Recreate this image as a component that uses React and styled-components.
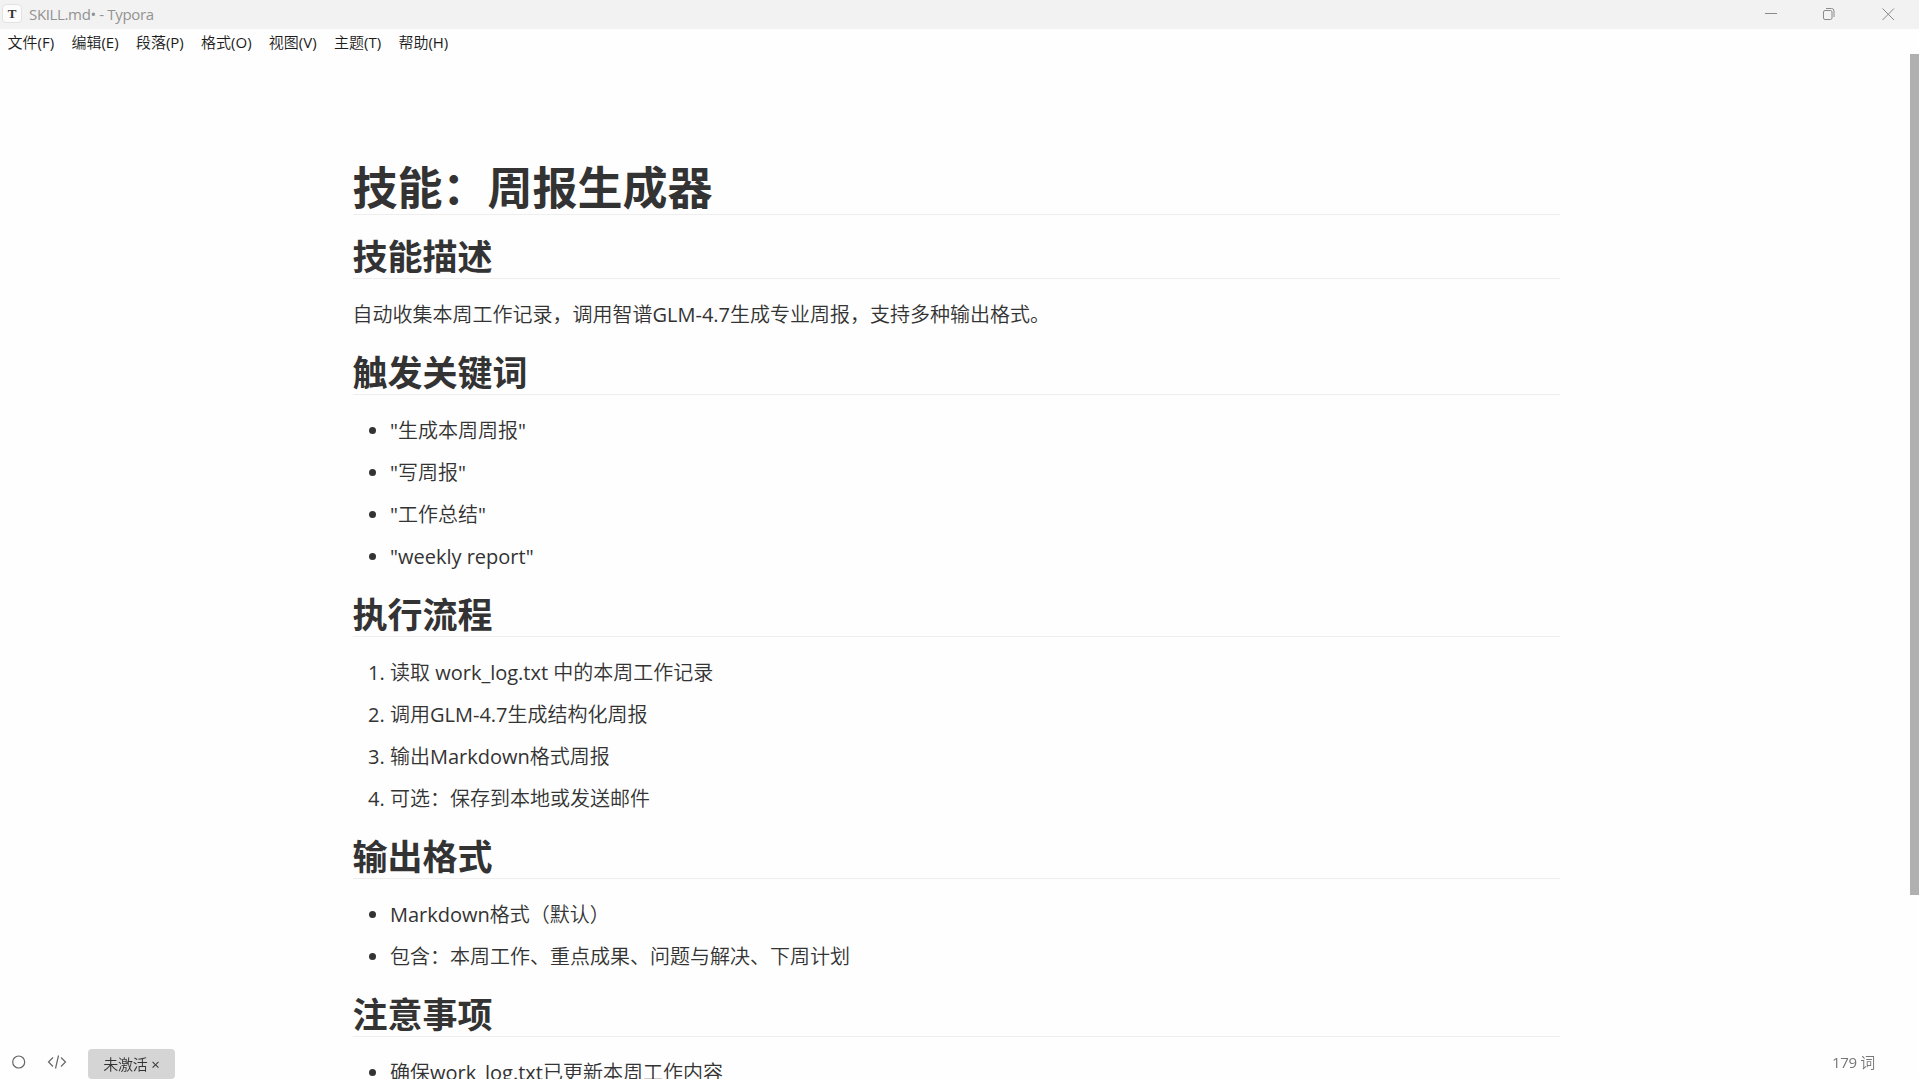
import React from "react";
import styled, { createGlobalStyle } from "styled-components";

const GlobalStyle = createGlobalStyle`
  * {
    box-sizing: border-box;
  }
  body {
    margin: 0;
    background-color: #fefefe;
    color: #333;
    font-family: "Open Sans", "Noto Sans CJK SC DemiLight", "Noto Sans CJK SC", sans-serif;
    overflow: hidden;
  }
`;

const Window = styled.div`
  display: flex;
  flex-flow: column;
  height: 1079px;
  overflow: hidden;
`;

const TitleBar = styled.header`
  display: flex;
  align-items: center;
  flex: 0 0 29px;
  padding-left: 2px;
  background-color: #f2f2f2;
`;

const AppIcon = styled.div`
  width: 20px;
  height: 19px;
  margin-top: -2px;
  border: 1px solid #e2e2e2;
  border-radius: 4px;
  background-color: #fcfcfc;
  color: #333;
  font: bold 13px/17px "Liberation Serif", serif;
  text-align: center;
`;

const Title = styled.span`
  flex: 1;
  padding-left: 7px;
  color: #929292;
  font-size: 15px;
  line-height: 29px;
  letter-spacing: -0.35px;
`;

const Controls = styled.div`
  display: flex;
  padding-right: 1px;
  svg {
    display: block;
    width: 58.5px;
    height: 29px;
    fill: none;
    stroke: #8a8a8a;
  }
`;

const MenuBar = styled.nav`
  display: flex;
  flex: 0 0 25px;
  min-height: 0;
  gap: 17.3px;
  padding: 0 7.5px;
  color: #1c1c1c;
  font-size: 15px;
  line-height: 27px;
  white-space: nowrap;
`;

const Editor = styled.main`
  display: flex;
  justify-content: space-between;
  flex: 1;
  min-height: 0;
  overflow: hidden;
`;

const Article = styled.article`
  width: 1207px;
  margin-left: 352.5px;
  padding-top: 106.4px;
  font-size: 20px;
  line-height: 32px;
`;

const H1 = styled.h1`
  margin: 0 0 20px;
  padding-top: 2px;
  border-bottom: 1px solid #eee;
  font-family: "Open Sans", "Noto Sans CJK SC", sans-serif;
  font-size: 45px;
  line-height: 52px;
`;

const H2 = styled.h2`
  margin: 20px 0;
  padding-top: 1px;
  border-bottom: 1px solid #eee;
  font-family: "Open Sans", "Noto Sans CJK SC", sans-serif;
  font-size: 35px;
  line-height: 41.875px;
`;

const Text = styled.p`
  margin: 20px 0;
`;

const List = styled.ul`
  margin: 20px 0;
  padding-left: 37.5px;
  li + li {
    margin-top: 10px;
  }
`;

const Scrollbar = styled.div`
  width: 9px;
  height: 841px;
  background-color: #b0b0b0;
`;

const StatusBar = styled.footer`
  position: fixed;
  left: 0;
  right: 0;
  bottom: 0;
  display: flex;
  align-items: flex-start;
  height: 31px;
  padding: 0 44px 0 11px;
  color: #666;
  font-size: 15px;
  svg {
    display: block;
    fill: none;
    stroke: #666;
    stroke-width: 1.2;
  }
`;

const CodeIcon = styled.svg`
  margin-left: 20px;
`;

const License = styled.div`
  width: 87px;
  height: 30px;
  margin: 1px 0 0 21px;
  border-radius: 4px;
  background-color: #d5d5d5;
  color: #333;
  line-height: 30px;
  text-align: center;
  letter-spacing: -0.2px;
  white-space: nowrap;
`;

const WordCount = styled.span`
  margin-left: auto;
  color: #777;
  line-height: 28px;
  letter-spacing: -0.35px;
`;

const menus = ["文件(F)", "编辑(E)", "段落(P)", "格式(O)", "视图(V)", "主题(T)", "帮助(H)"];

const sections = [
  { title: "技能描述", text: "自动收集本周工作记录，调用智谱GLM-4.7生成专业周报，支持多种输出格式。" },
  {
    title: "触发关键词",
    items: ['"生成本周周报"', '"写周报"', '"工作总结"', '"weekly report"'],
  },
  {
    title: "执行流程",
    ordered: true,
    items: [
      "读取 work_log.txt 中的本周工作记录",
      "调用GLM-4.7生成结构化周报",
      "输出Markdown格式周报",
      "可选：保存到本地或发送邮件",
    ],
  },
  {
    title: "输出格式",
    items: ["Markdown格式（默认）", "包含：本周工作、重点成果、问题与解决、下周计划"],
  },
  { title: "注意事项", items: ["确保work_log.txt已更新本周工作内容"] },
];

const WindowControls = () => (
  <Controls>
    <svg viewBox="0 0 58.5 29">
      <path d="M22 13.5h12" />
    </svg>
    <svg viewBox="0 0 58.5 29">
      <rect x="22.5" y="10.5" width="8.5" height="9" rx="1.5" />
      <path d="M25 8.5h5.5a2.5 2.5 0 0 1 2.5 2.5v6" />
    </svg>
    <svg viewBox="0 0 58.5 29">
      <path d="M22.5 8.5l11.5 11.5M34 8.5L22.5 20" />
    </svg>
  </Controls>
);

const App = () => {
  return (
    <Window>
      <GlobalStyle />
      <TitleBar>
        <AppIcon>T</AppIcon>
        <Title>SKILL.md• - Typora</Title>
        <WindowControls />
      </TitleBar>
      <MenuBar>
        {menus.map((menu) => (
          <span key={menu}>{menu}</span>
        ))}
      </MenuBar>
      <Editor>
        <Article>
          <H1>技能：周报生成器</H1>
          {sections.map(({ title, text, items, ordered }) => (
            <React.Fragment key={title}>
              <H2>{title}</H2>
              {text && <Text>{text}</Text>}
              {items && (
                <List as={ordered ? "ol" : "ul"}>
                  {items.map((item) => (
                    <li key={item}>{item}</li>
                  ))}
                </List>
              )}
            </React.Fragment>
          ))}
        </Article>
        <Scrollbar />
      </Editor>
      <StatusBar>
        <svg width="16" height="28" viewBox="0 0 16 28">
          <circle cx="7.7" cy="14" r="6" />
        </svg>
        <CodeIcon width="20" height="28" viewBox="0 0 20 28">
          <path d="M6 9.5l-4.5 4.500L6 18.5M14 9.5l4.5 4.500L14 18.5M11.5 7.5l-3 13" />
        </CodeIcon>
        <License>未激活 ×</License>
        <WordCount>179 词</WordCount>
      </StatusBar>
    </Window>
  );
};

export default App;
